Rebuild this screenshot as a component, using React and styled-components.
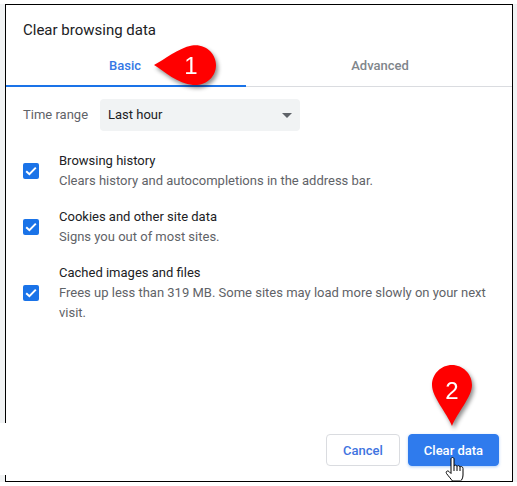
import React from 'react'
import styled, { createGlobalStyle } from 'styled-components'

const GlobalStyle = createGlobalStyle`
  html, body {
    margin: 0;
    padding: 0;
    background: #fff;
  }
  body {
    font-family: Roboto, "Liberation Sans", sans-serif;
  }
`

const Page = styled.div`
  position: relative;
  width: 517px;
  height: 486px;
  padding-top: 4px;
  box-sizing: border-box;
  overflow: hidden;
`

const Backdrop = styled.div`
  height: 478px;
  padding: 0 4px 0 5px;
  box-sizing: border-box;
  background: #f1f3f4;
`

const Dialog = styled.div`
  height: 100%;
  box-sizing: border-box;
  border: 1px solid #000;
  background: #fff;
  display: flex;
  flex-direction: column;
`

const Title = styled.h1`
  margin: 0;
  padding: 15px 0 0 17px;
  font-size: 15px;
  line-height: 20px;
  font-weight: 400;
  color: #202124;
`

const Tabs = styled.div`
  display: grid;
  grid-template-columns: 240px 1fr;
  height: 41px;
  margin-top: 5px;
  border-bottom: 1px solid #dadce0;
`

const Tab = styled.div`
  display: flex;
  align-items: center;
  justify-content: center;
  height: 40px;
  font-size: 13px;
  font-weight: 500;
  color: ${({ $active }) => ($active ? '#3578e5' : '#80868b')};
  border-bottom: ${({ $active }) => ($active ? '2px solid #1a73e8' : 'none')};
  margin-bottom: ${({ $active }) => ($active ? '-1px' : '0')};
  padding-left: ${({ $active }) => ($active ? '0' : '2px')};
  padding-right: ${({ $active }) => ($active ? '2px' : '0')};
`

const RangeRow = styled.div`
  display: flex;
  align-items: center;
  padding: 12px 0 0 17px;
`

const RangeLabel = styled.span`
  width: 77px;
  font-size: 13px;
  line-height: 30px;
  color: #5f6368;
`

const Select = styled.div`
  width: 200px;
  height: 32px;
  box-sizing: border-box;
  padding: 0 8px 2px 8px;
  display: flex;
  align-items: center;
  justify-content: space-between;
  background: #f1f3f4;
  border-radius: 4px;
  font-size: 13px;
  color: #202124;
`

const Caret = styled.span`
  width: 0;
  height: 0;
  margin-top: 2px;
  border-left: 5px solid transparent;
  border-right: 5px solid transparent;
  border-top: 5px solid #5f6368;
`

const Options = styled.div`
  display: flex;
  flex-direction: column;
  gap: 16px;
  padding: 20px 17px 0;
`

const Option = styled.div`
  display: flex;
  align-items: center;
  gap: 20px;
`

const Box = styled.span`
  flex: none;
  width: 16px;
  height: 16px;
  border-radius: 2px;
  background: #1a73e8;
  display: flex;
  align-items: center;
  justify-content: center;
`

const OptionText = styled.div`
  font-size: 13px;
  line-height: 20px;
`

const OptionTitle = styled.div`
  color: #202124;
`

const OptionHint = styled.div`
  color: #5f6368;
`

const Footer = styled.div`
  margin-top: auto;
  padding: 0 13px 15px 0;
  display: flex;
  justify-content: flex-end;
  gap: 8px;
`

const Button = styled.button`
  height: 32px;
  box-sizing: border-box;
  padding: 0;
  width: ${({ $primary }) => ($primary ? '91px' : '74px')};
  border-radius: 4px;
  border: 1px solid ${({ $primary }) => ($primary ? '#2f7bed' : '#dadce0')};
  background: ${({ $primary }) => ($primary ? '#2f7bed' : '#fff')};
  color: ${({ $primary }) => ($primary ? '#fff' : '#3f74e0')};
  box-shadow: ${({ $primary }) => ($primary ? '0 1px 3px rgba(26, 115, 232, 0.35)' : 'none')};
  font-family: inherit;
  font-size: 13px;
  font-weight: 500;
`

// white strip that cuts the dialog's left edge in the screenshot
const EdgePatch = styled.div`
  position: absolute;
  left: 0;
  top: 423px;
  width: 7px;
  height: 52px;
  background: #fff;
`

const Pin = styled.div`
  position: absolute;
  left: ${({ $x }) => $x}px;
  top: ${({ $y }) => $y}px;
  width: ${({ $w }) => $w}px;
  height: ${({ $h }) => $h}px;
  filter: drop-shadow(2px 3px 2px rgba(0, 0, 0, 0.45));

  svg {
    display: block;
  }
`

const PinNumber = styled.span`
  position: absolute;
  left: ${({ $x }) => $x}px;
  top: ${({ $y }) => $y}px;
  width: 24px;
  text-align: center;
  font-family: "Liberation Sans", Arial, sans-serif;
  font-size: 24px;
  line-height: 28px;
  color: #fff;
`

const Hand = styled.svg`
  position: absolute;
  left: 445px;
  top: 456px;
`

const Check = () => (
  <svg width="12" height="10" viewBox="0 0 12 10" fill="none">
    <path d="M1.2 5.2 L4.4 8.2 L10.8 1.6" stroke="#fff" strokeWidth="2" />
  </svg>
)

const options = [
  { title: 'Browsing history', hint: ['Clears history and autocompletions in the address bar.'] },
  { title: 'Cookies and other site data', hint: ['Signs you out of most sites.'] },
  {
    title: 'Cached images and files',
    hint: ['Frees up less than 319 MB. Some sites may load more slowly on your next', 'visit.'],
  },
]

export default function App() {
  return (
    <Page>
      <GlobalStyle />
      <Backdrop>
        <Dialog>
          <Title>Clear browsing data</Title>
          <Tabs>
            <Tab $active>Basic</Tab>
            <Tab>Advanced</Tab>
          </Tabs>
          <RangeRow>
            <RangeLabel>Time range</RangeLabel>
            <Select>
              Last hour
              <Caret />
            </Select>
          </RangeRow>
          <Options>
            {options.map((o) => (
              <Option key={o.title}>
                <Box>
                  <Check />
                </Box>
                <OptionText>
                  <OptionTitle>{o.title}</OptionTitle>
                  {o.hint.map((line) => (
                    <OptionHint key={line}>{line}</OptionHint>
                  ))}
                </OptionText>
              </Option>
            ))}
          </Options>
          <Footer>
            <Button>Cancel</Button>
            <Button $primary>Clear data</Button>
          </Footer>
        </Dialog>
      </Backdrop>
      <EdgePatch />

      <Pin $x={154} $y={45} $w={64} $h={42}>
        <svg width="64" height="42" viewBox="0 0 64 42">
          <path d="M0 20 C10 15 24 3 38 0.5 C52 -1.5 62 9 62 20 C62 32 52 41 39 40 C24 39 10 26 0 20 Z" fill="#f00" />
        </svg>
        <PinNumber $x={25} $y={7}>1</PinNumber>
      </Pin>

      <Pin $x={432} $y={365} $w={40} $h={62}>
        <svg width="40" height="62" viewBox="0 0 40 62">
          <path d="M20 61 C15 48 0 32 0 20 C0 9 9 0 20 0 C31 0 40 9 40 20 C40 32 25 48 20 61 Z" fill="#f00" />
        </svg>
        <PinNumber $x={8} $y={12}>2</PinNumber>
      </Pin>

      <Hand width="20" height="26" viewBox="0 0 20 26">
        <path
          d="M6 3 C6 1 9 1 9 3 L9 10 C9.5 8.8 11.7 8.8 12 10.5 C12.5 9.3 14.7 9.3 15 11 C15.5 10.2 18 10.3 18 12.5 L18 19 C18 22 16.5 24.5 15.5 25 L7.5 25 C6 23 3 19.5 1.5 17.5 C0.5 16 2 14 4 15.5 L6 17.5 Z"
          fill="#fff"
          stroke="#000"
          strokeWidth="1"
          strokeLinejoin="round"
        />
        <path d="M9 10 L9 15 M12 10.5 L12 15 M15 11 L15 15" stroke="#000" strokeWidth="1" fill="none" />
      </Hand>
    </Page>
  )
}
